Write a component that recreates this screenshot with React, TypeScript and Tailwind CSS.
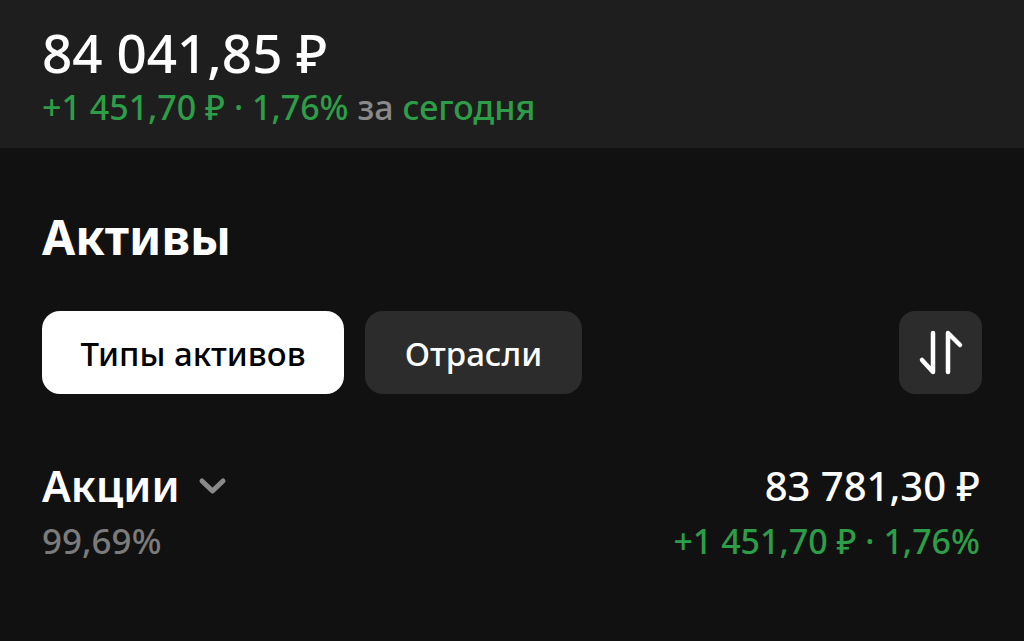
const font = { fontFamily: '"Noto Sans", "Open Sans", sans-serif' };

function SortIcon() {
  return (
    <svg width="83" height="83" viewBox="0 0 83 83" fill="none" stroke="white" strokeWidth="4.5" strokeLinecap="round" strokeLinejoin="round">
      <path d="M34 22 V61 L23 49" />
      <path d="M49 61 V22 L61 34" />
    </svg>
  );
}

function Chevron() {
  return (
    <svg width="29" height="18" viewBox="0 0 29 18" fill="none" stroke="#8a8a8a" strokeWidth="5" strokeLinecap="round" strokeLinejoin="round">
      <path d="M4 4 L14.5 14 L25 4" />
    </svg>
  );
}

export default function App() {
  return (
    <div className="flex h-[641px] w-[1024px] flex-col overflow-hidden bg-[#111111] text-white" style={font}>
      <header className="h-[148px] shrink-0 bg-[#1e1e1e] px-[42px] pt-[21px]">
        <div className="text-[53px] leading-[64px] font-medium">84 041,85 ₽</div>
        <div className="mt-[4px] text-[34px] leading-[36px] font-medium text-[#2e9d47]">
          +1 451,70 ₽ · 1,76% <span className="text-[#8a8a8a]">за</span> сегодня
        </div>
      </header>

      <main className="px-[42px]">
        <h2 className="mt-[59px] text-[48px] leading-[60px] font-bold">Активы</h2>

        <div className="mt-[44px] flex items-center gap-[21px]">
          <button className="flex h-[83px] w-[302px] items-center justify-center rounded-[18px] bg-white pt-[3px] text-[33px] font-medium text-black">
            Типы активов
          </button>
          <button className="flex h-[83px] w-[217px] items-center justify-center rounded-[18px] bg-[#2c2c2c] pt-[3px] text-[33px] font-medium text-white">
            Отрасли
          </button>
          <button className="ml-auto flex h-[83px] w-[83px] items-center justify-center rounded-[16px] bg-[#2c2c2c]">
            <SortIcon />
          </button>
        </div>

        <div className="mt-[64px] flex items-start justify-between pr-[2px]">
          <div>
            <div className="flex items-center gap-[18px]">
              <span className="text-[43px] leading-[56px] font-semibold">Акции</span>
              <Chevron />
            </div>
            <div className="mt-[5px] text-[35px] leading-[44px] font-medium text-[#7b7b7b]">99,69%</div>
          </div>
          <div className="text-right">
            <div className="text-[40px] leading-[56px] font-medium">83 781,30 ₽</div>
            <div className="mt-[5px] text-[34px] leading-[44px] font-medium text-[#2e9d47]">+1 451,70 ₽ · 1,76%</div>
          </div>
        </div>
      </main>
    </div>
  );
}
